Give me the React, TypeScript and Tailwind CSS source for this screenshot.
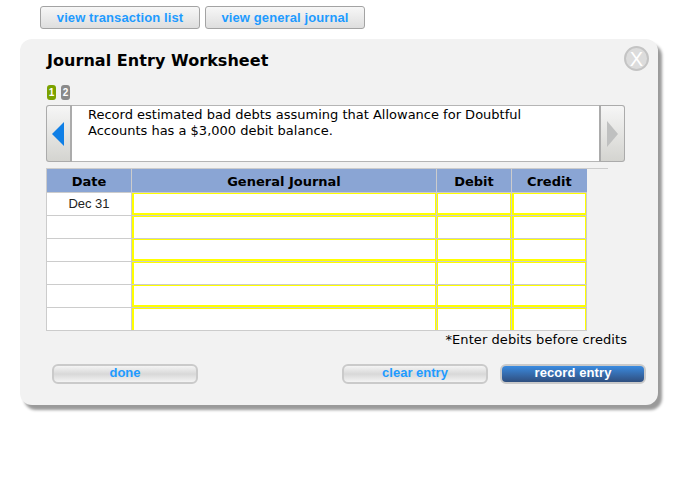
const ROWS = ["Dec 31", "", "", "", "", ""]

function YellowCell({ thickBottom, thickLeft }: { thickBottom: boolean; thickLeft?: boolean }) {
  return (
    <td className="p-0 border border-[#cccccc]">
      <div
        className={`h-[22px] border-t border-r border-[#ffff00] bg-white ${thickBottom ? "border-b-2" : "border-b-0"} ${thickLeft ? "border-l-2" : "border-l"}`}
      />
    </td>
  )
}

function NavButton({ children }: { children: React.ReactNode }) {
  return (
    <button className="w-[160px] h-[23px] rounded-[3px] border border-[#a3a3a3] bg-gradient-to-b from-[#f7f7f7] to-[#dedede] text-[13px] font-bold text-[#1e9bff] tracking-[0.1px] font-['Liberation_Sans',sans-serif]">
      {children}
    </button>
  )
}

function PillButton({ children, width }: { children: React.ReactNode; width: string }) {
  return (
    <button className={`${width} h-[20px] pb-[2px] rounded-[6px] border-2 border-[#cacaca] bg-gradient-to-b from-[#f4f4f4] via-[#d8d8d8] to-[#f4f4f4] text-[13px] leading-[14px] font-bold text-[#1e9bff] font-['Liberation_Sans',sans-serif]`}>
      {children}
    </button>
  )
}

export default function App() {
  return (
    <div className="w-[682px] h-[482px] bg-white overflow-hidden pt-[6px] pl-[20px] font-['DejaVu_Sans',sans-serif]">
      <div className="flex gap-[5px] pl-[20px]">
        <NavButton>view transaction list</NavButton>
        <NavButton>view general journal</NavButton>
      </div>

      <div className="relative mt-[10px] w-[638px] h-[366px] rounded-[12px] bg-[#f2f2f2] shadow-[4px_5px_3px_#9a9a9a] pt-[11px] pl-[26px]">
        <h1 className="pt-[1px] pl-[1px] text-[16px] leading-[20px] font-bold text-black tracking-[0.05px]">Journal Entry Worksheet</h1>

        <button className="absolute top-[7px] right-[9px] w-[25px] h-[25px] rounded-full border-2 border-[#c4c4c4] bg-[#dcdcdc] text-white text-[20px] leading-[20px] font-['Liberation_Sans',sans-serif] flex items-center justify-center">
          X
        </button>

        <div className="flex gap-[5px] mt-[14px] pl-[1px]">
          <span className="w-[9px] h-[15px] rounded-[3px] bg-[#7ba200] text-white text-[10px] leading-[15px] font-bold text-center font-['Liberation_Sans',sans-serif]">1</span>
          <span className="w-[9px] h-[15px] rounded-[3px] bg-[#8a8a8a] text-white text-[10px] leading-[15px] font-bold text-center font-['Liberation_Sans',sans-serif]">2</span>
        </div>

        <div className="flex mt-[5px] w-[579px] h-[57px]">
          <div className="w-[26px] shrink-0 rounded-l-[3px] border border-[#ababab] border-r-2 bg-gradient-to-b from-[#f6f6f6] to-[#d4d4d0] flex items-center justify-center">
            <svg width="13" height="24" viewBox="0 0 13 24"><path d="M12 0 L0 12 L12 24 Z" fill="#0f7fe6" /></svg>
          </div>
          <div className="flex-1 border-y border-[#b5b5b5] bg-white pt-[1px] pl-[16px] pr-[60px] text-[13px] leading-[16px] text-black">
            Record estimated bad debts assuming that Allowance for Doubtful Accounts has a $3,000 debit balance.
          </div>
          <div className="w-[26px] shrink-0 rounded-r-[3px] border border-[#ababab] border-l-2 bg-gradient-to-b from-[#f6f6f6] to-[#d4d4d0] flex items-center justify-center">
            <svg width="13" height="26" viewBox="0 0 13 26"><path d="M1 0 L12 13 L1 26 Z" fill="#bfc0c0" /></svg>
          </div>
        </div>

        <div className="mt-[6px] w-[562px] border-t border-[#cccccc]">
          <table className="w-[540px] table-fixed border-collapse">
            <colgroup>
              <col className="w-[85px]" />
              <col className="w-[305px]" />
              <col className="w-[75px]" />
              <col className="w-[75px]" />
            </colgroup>
            <thead>
              <tr className="h-[23px] bg-[#8aa5d4] text-[13px] font-bold text-black">
                <th className="p-0 pt-[2px] font-bold border-l border-[#cccccc]">Date</th>
                <th className="p-0 pt-[2px] font-bold border-l border-[#cccccc]">General Journal</th>
                <th className="p-0 pt-[2px] font-bold border-l border-[#cccccc]">Debit</th>
                <th className="p-0 pt-[2px] font-bold border-l border-[#cccccc]">Credit</th>
              </tr>
            </thead>
            <tbody>
              {ROWS.map((date, i) => (
                <tr key={i} className="h-[23px]">
                  <td className="p-0 border border-[#cccccc] bg-white text-center text-[13px] text-[#222] font-['Liberation_Sans',sans-serif]">{date}</td>
                  <YellowCell thickBottom={i % 2 === 0} thickLeft />
                  <YellowCell thickBottom={i % 2 === 0} />
                  <YellowCell thickBottom={i % 2 === 0} thickLeft />
                </tr>
              ))}
            </tbody>
          </table>
          <div className="w-[581px] mt-[1px] text-right text-[13px] leading-[16px] text-black tracking-[0.07px]">*Enter debits before credits</div>
        </div>

        <div className="flex mt-[16px] ml-[6px] w-[594px]">
          <PillButton width="w-[146px]">done</PillButton>
          <div className="ml-auto flex gap-[12px]">
            <PillButton width="w-[146px]">clear entry</PillButton>
            <button className="w-[146px] h-[20px] pb-[2px] rounded-[6px] border-2 border-[#cacaca] bg-gradient-to-b from-[#3a8be0] to-[#2f4f7f] text-[13px] leading-[14px] font-bold text-white tracking-[0.1px] font-['Liberation_Sans',sans-serif]">
              record entry
            </button>
          </div>
        </div>
      </div>
    </div>
  )
}
